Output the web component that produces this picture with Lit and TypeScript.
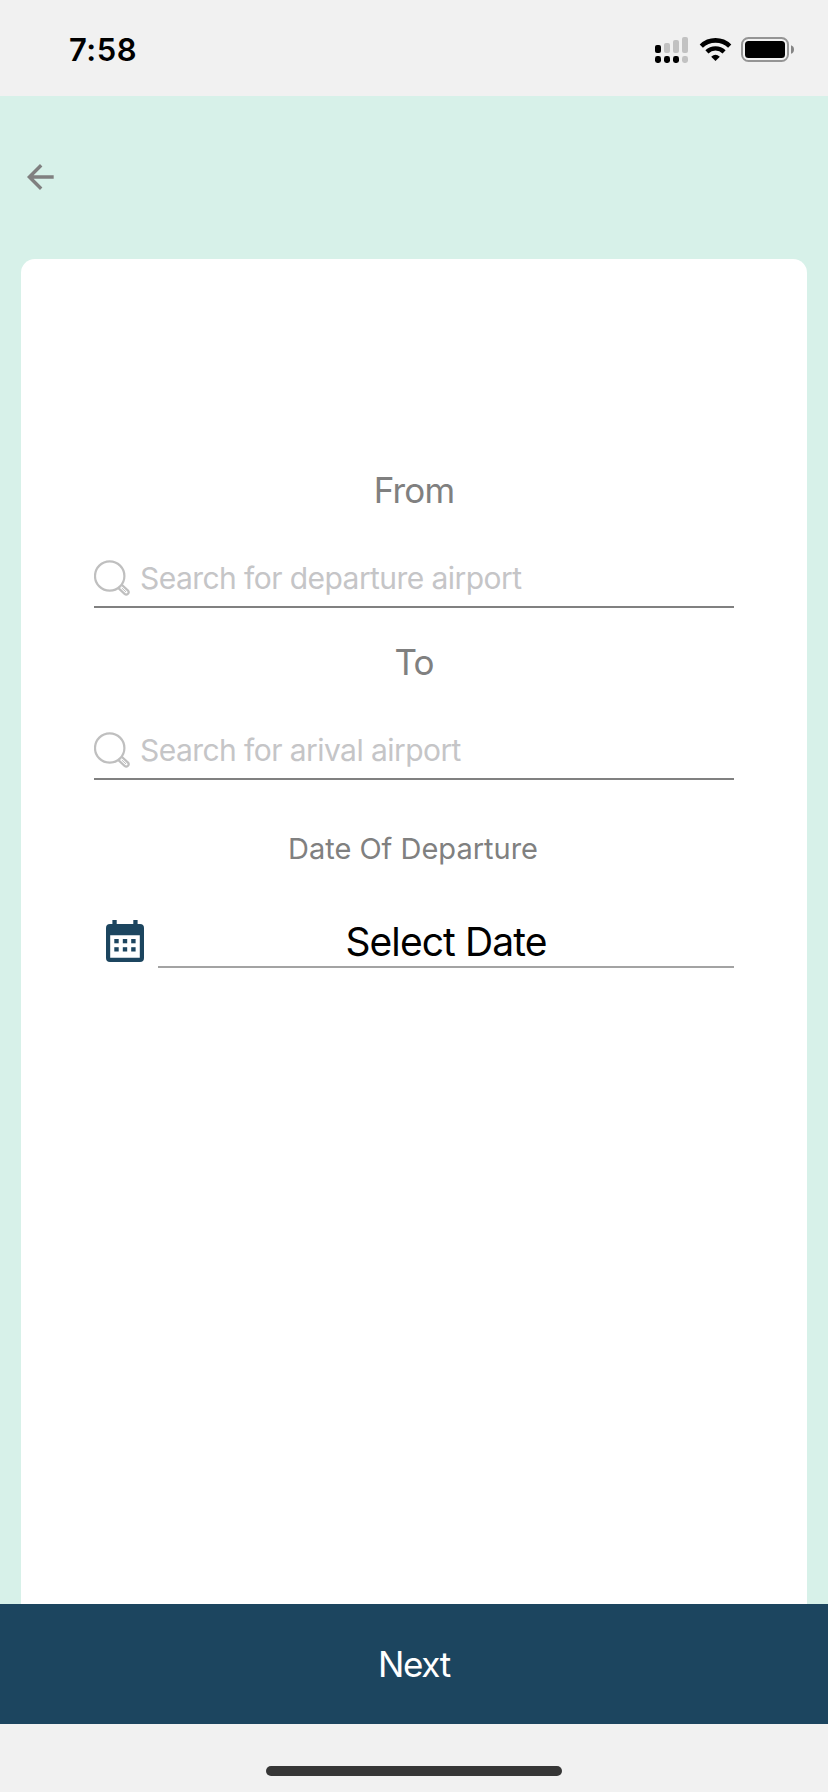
import { LitElement, html, css, svg } from "lit";
import { customElement, property } from "lit/decorators.js";

@customElement("status-bar")
class StatusBar extends LitElement {
  static styles = css`
    :host { display: flex; justify-content: space-between; height: 96px; background: #f1f1f1; box-sizing: border-box; padding: 30px 32px 0 69px; }
    .time { font-size: 31px; font-weight: 600; line-height: 40px; letter-spacing: 0.5px; color: #000; }
    .icons { display: block; margin-top: 5px; }
  `;
  render() {
    const columns = [
      { x: 0, h: 8, c: "#000", d: "#000" },
      { x: 9, h: 10, c: "#c2c2c2", d: "#000" },
      { x: 18, h: 13, c: "#c2c2c2", d: "#000" },
      { x: 27, h: 16, c: "#c2c2c2", d: "#c2c2c2" },
    ];
    return html`
      <div class="time">7:58</div>
      <svg class="icons" width="141" height="28" viewBox="0 0 141 28">
        ${columns.map((b) => svg`
          <rect x=${b.x} y=${18 - b.h} width="6" height=${b.h} rx="2" fill=${b.c} />
          <rect x=${b.x} y="21" width="6" height="7" rx="2.4" fill=${b.d} />`)}
        <g fill="none" stroke="#000">
          <path d="M46.3 11.1A20.4 20.4 0 0 1 74.7 11.1" stroke-width="4.6" />
          <path d="M51.9 16.8A12.4 12.4 0 0 1 69.1 16.8" stroke-width="4.4" />
        </g>
        <path d="M60.5 26L56.2 21.7Q60.5 18 64.8 21.7Z" fill="#000" />
        <rect x="87" y="3" width="46" height="23" rx="6.5" fill="none" stroke="#959595" stroke-width="2" />
        <rect x="90" y="6" width="40" height="17" rx="3.5" fill="#000" />
        <path d="M136 10.2Q139 11.2 139 14.5T136 18.8Z" fill="#858585" />
      </svg>
    `;
  }
}

@customElement("airport-field")
class AirportField extends LitElement {
  @property() label = "";
  @property() hint = "";
  static styles = css`
    :host { display: block; height: 172px; }
    .label { height: 40px; line-height: 40px; font-size: 35px; letter-spacing: -0.8px; text-align: center; color: #808080; }
    .field { display: flex; align-items: flex-start; gap: 10px; height: 46px; margin-top: 50px; border-bottom: 2px solid #808080; }
    .icon { display: block; flex: none; }
    .hint { line-height: 36px; font-size: 30px; letter-spacing: -0.56px; color: #c5c5c7; white-space: nowrap; }
  `;
  render() {
    return html`
      <div class="label">${this.label}</div>
      <div class="field">
        <svg class="icon" width="36" height="36" viewBox="0 0 36 36" fill="none" stroke="#bfbfbf">
          <circle cx="15.7" cy="16" r="14.7" stroke-width="2.2" />
          <path d="M24.7 28.4L30.6 33.9Q32.2 35.3 33.8 33.9Q35.5 32.3 34 30.6L28 25" stroke-width="2.2" />
          <path d="M27.8 28L32 31.9" stroke-width="1" />
        </svg>
        <div class="hint">${this.hint}</div>
      </div>
    `;
  }
}

@customElement("date-field")
class DateField extends LitElement {
  static styles = css`
    :host { display: block; padding-top: 15px; }
    .label { height: 40px; line-height: 40px; font-size: 29px; text-align: center; color: #808080; padding-right: 2px; }
    .row { display: flex; justify-content: space-between; padding: 51px 0 0 12px; }
    .icon { display: block; }
    .value { box-sizing: border-box; width: 576px; height: 48px; line-height: 44px; font-size: 39px; letter-spacing: -0.9px; text-align: center; color: #000; border-bottom: 2px solid #a3a3a3; }
  `;
  render() {
    return html`
      <div class="label">Date Of Departure</div>
      <div class="row">
        <svg class="icon" width="38" height="42" viewBox="0 0 38 42" fill="#1c455f">
          <rect x="6.4" y="0" width="4.3" height="6" />
          <rect x="27.3" y="0" width="4.3" height="6" />
          <path fill-rule="evenodd" d="M4 4H34Q38 4 38 8V38Q38 42 34 42H4Q0 42 0 38V8Q0 4 4 4ZM4.2 15.2V37.8H33.8V15.2Z" />
          ${[19, 27.2].map((y) => [8.3, 16.8, 25.2].map((x) => svg`<rect x=${x} y=${y} width="4.4" height="4.3" />`))}
        </svg>
        <div class="value">Select Date</div>
      </div>
    `;
  }
}

@customElement("app-root")
class AppRoot extends LitElement {
  static styles = css`
    :host { display: flex; flex-direction: column; width: 828px; height: 1792px; background: #f1f1f1; font-family: Inter, "Liberation Sans", sans-serif; }
    .page { flex: 1; display: flex; flex-direction: column; padding: 0 21px; background: #d7f1e9; }
    .nav { height: 163px; box-sizing: border-box; padding: 67px 0 0 5px; }
    .back { display: block; }
    .card { flex: 1; background: #fff; border-radius: 14px 14px 0 0; padding: 211px 73px 0; }
    .next { height: 120px; line-height: 120px; text-align: center; font-size: 35px; letter-spacing: -1.3px; color: #fff; background: #1c455f; }
    .home { height: 68px; box-sizing: border-box; padding-top: 42px; }
    .indicator { width: 296px; height: 10px; border-radius: 5px; margin: 0 auto; background: #363636; }
  `;
  render() {
    return html`
      <status-bar></status-bar>
      <main class="page">
        <div class="nav">
          <svg class="back" width="30" height="28" viewBox="0 0 30 28" fill="none" stroke="#808080" stroke-width="3.4">
            <path d="M27.7 14H4M15.2 2.2L3.4 14L15.2 25.8" />
          </svg>
        </div>
        <section class="card">
          <airport-field label="From" hint="Search for departure airport"></airport-field>
          <airport-field label="To" hint="Search for arival airport"></airport-field>
          <date-field></date-field>
        </section>
      </main>
      <div class="next">Next</div>
      <div class="home"><div class="indicator"></div></div>
    `;
  }
}
